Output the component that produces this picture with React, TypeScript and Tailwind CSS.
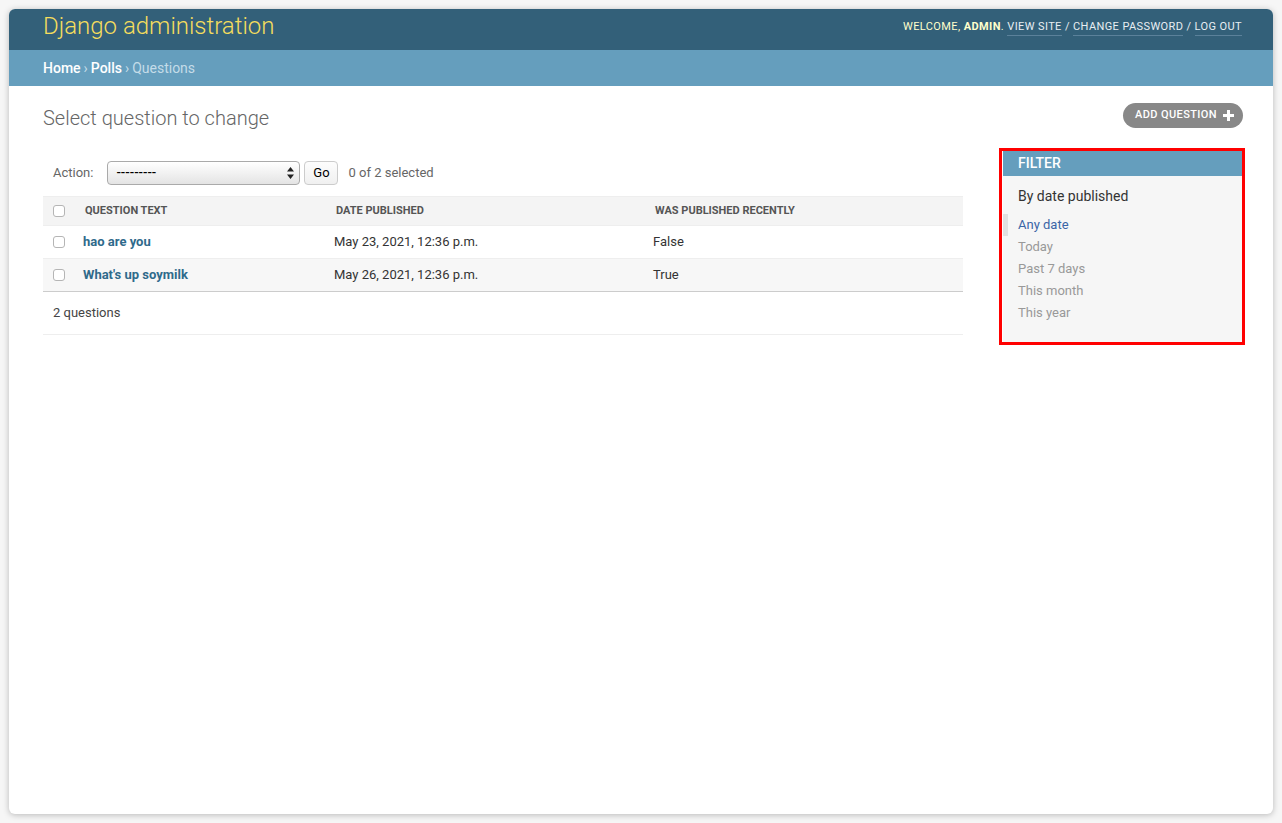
import React from "react";

const rows = [
  { text: "hao are you", date: "May 23, 2021, 12:36 p.m.", recent: "False" },
  { text: "What's up soymilk", date: "May 26, 2021, 12:36 p.m.", recent: "True" },
];

const filters = ["Any date", "Today", "Past 7 days", "This month", "This year"];

function Checkbox() {
  return <span className="block h-[12px] w-[12px] rounded-[3px] border border-[#b5b5b5] bg-white" />;
}

export default function App() {
  return (
    <div className="min-h-[823px] w-full bg-[#f6f6f6] p-[9px] font-['Roboto','Liberation_Sans',sans-serif]">
      <div className="flex h-[805px] flex-col overflow-hidden rounded-[6px] bg-white shadow-[0_1px_6px_rgba(0,0,0,0.25)]">
        {/* Header */}
        <header className="flex h-[41px] items-center justify-between bg-[#336079] pl-[34px] pr-[31px]">
          <h1 className="pb-[8px] text-[24px] font-light leading-none text-[#f5dd5d]">Django administration</h1>
          <div className="flex items-center pb-[4px] text-[11px] uppercase tracking-[0.4px] text-[#ffc]">
            <span>Welcome,&nbsp;</span>
            <strong className="font-bold">admin</strong>
            <span>.&nbsp;</span>
            <a className="border-b border-[#5b819a] text-[#e8eef2]">View site</a>
            <span className="text-[#e8eef2]">&nbsp;/&nbsp;</span>
            <a className="border-b border-[#5b819a] text-[#e8eef2]">Change password</a>
            <span className="text-[#e8eef2]">&nbsp;/&nbsp;</span>
            <a className="border-b border-[#5b819a] text-[#e8eef2]">Log out</a>
          </div>
        </header>

        {/* Breadcrumbs */}
        <div className="flex h-[36px] items-center bg-[#659ebd] pl-[34px] text-[14px] text-white">
          <a className="font-medium">Home</a>
          <span className="px-[3px] text-[#c4dce8]">›</span>
          <a className="font-medium">Polls</a>
          <span className="px-[3px] text-[#c4dce8]">›</span>
          <span className="text-[#c4dce8]">Questions</span>
        </div>

        {/* Content */}
        <div className="pl-[34px] pr-[30px] pt-[17px]">
          <div className="flex items-start justify-between">
            <h2 className="text-[20px] font-light text-[#666]">Select question to change</h2>
            <a className="flex h-[25px] items-center gap-[6px] rounded-full bg-[#888] pl-[12px] pr-[9px] text-[11px] font-medium uppercase tracking-[0.4px] text-white">
              Add question
              <svg width="11" height="11" viewBox="0 0 11 11">
                <path d="M4 0h3v4h4v3H7v4H4V7H0V4h4z" fill="white" />
              </svg>
            </a>
          </div>

          <div className="mt-[15px] flex items-start">
            {/* Changelist */}
            <div className="w-[920px] shrink-0">
              <div className="flex h-[48px] items-center pl-[10px] pt-px text-[13px] text-[#666]">
                <span>Action:</span>
                <div className="ml-[14px] flex h-[24px] w-[193px] items-center justify-between rounded-[4px] border border-[#aaa] bg-gradient-to-b from-white to-[#e4e4e4] pl-[8px] pr-[5px] text-[13px] font-medium text-black">
                  <span>---------</span>
                  <svg width="7" height="12" viewBox="0 0 7 12">
                    <path d="M3.5 0L7 4.5H0z M3.5 12L0 7.5h7z" fill="#222" />
                  </svg>
                </div>
                <button className="ml-[4px] flex h-[24px] w-[34px] items-center justify-center rounded-[4px] border border-[#ccc] bg-gradient-to-b from-[#fdfdfd] to-[#f0f0f0] text-[13px] text-black">
                  Go
                </button>
                <span className="ml-[10px]">0 of 2 selected</span>
              </div>

              <div className="grid grid-cols-[40px_251px_319px_1fr]">
                {/* Header row */}
                <div className="flex h-[30px] items-center border-y border-[#eee] bg-[#f4f4f4] pl-[10px]">
                  <Checkbox />
                </div>
                <div className="flex h-[30px] items-center border-y border-[#eee] bg-[#f4f4f4] pl-[2px] text-[11px] font-bold uppercase text-[#555]">
                  Question text
                </div>
                <div className="flex h-[30px] items-center border-y border-[#eee] bg-[#f4f4f4] pl-[2px] text-[11px] font-bold uppercase text-[#555]">
                  Date published
                </div>
                <div className="flex h-[30px] items-center border-y border-[#eee] bg-[#f4f4f4] pl-[2px] text-[11px] font-bold uppercase text-[#555]">
                  Was published recently
                </div>

                {rows.map((r, i) => {
                  const bg = i % 2 === 1 ? "bg-[#f7f7f7]" : "bg-white";
                  const border = i === rows.length - 1 ? "border-b border-[#ccc]" : "border-b border-[#eee]";
                  return (
                    <React.Fragment key={r.text}>
                      <div className={`flex h-[33px] items-center pl-[10px] ${bg} ${border}`}>
                        <Checkbox />
                      </div>
                      <div className={`flex h-[33px] items-center text-[13px] font-bold text-[#2f6a8b] ${bg} ${border}`}>
                        {r.text}
                      </div>
                      <div className={`flex h-[33px] items-center text-[13px] text-[#333] ${bg} ${border}`}>
                        {r.date}
                      </div>
                      <div className={`flex h-[33px] items-center text-[13px] text-[#333] ${bg} ${border}`}>
                        {r.recent}
                      </div>
                    </React.Fragment>
                  );
                })}
              </div>

              <div className="flex h-[43px] items-center border-b border-[#eee] pl-[10px] text-[13px] text-[#444]">
                2 questions
              </div>
            </div>

            {/* Filter */}
            <div className="ml-[36px] w-[246px] shrink-0 border-[3px] border-[#ff0000] pl-px">
              <div className="bg-[#f6f6f6] pb-[18px]">
                <h3 className="flex h-[25px] items-center bg-[#659ebd] pl-[15px] text-[14px] font-medium uppercase text-white">
                  Filter
                </h3>
                <h4 className="pl-[15px] pt-[10px] text-[14px] text-[#333]">By date published</h4>
                <ul className="mt-[7px]">
                  {filters.map((f, i) => (
                    <li
                      key={f}
                      className={`flex h-[22px] items-center text-[13px] ${
                        i === 0
                          ? "border-l-[5px] border-[#e0e0e0] pl-[10px] text-[#3a65a6]"
                          : "pl-[15px] text-[#999]"
                      }`}
                    >
                      {f}
                    </li>
                  ))}
                </ul>
              </div>
            </div>
          </div>
        </div>
      </div>
    </div>
  );
}
